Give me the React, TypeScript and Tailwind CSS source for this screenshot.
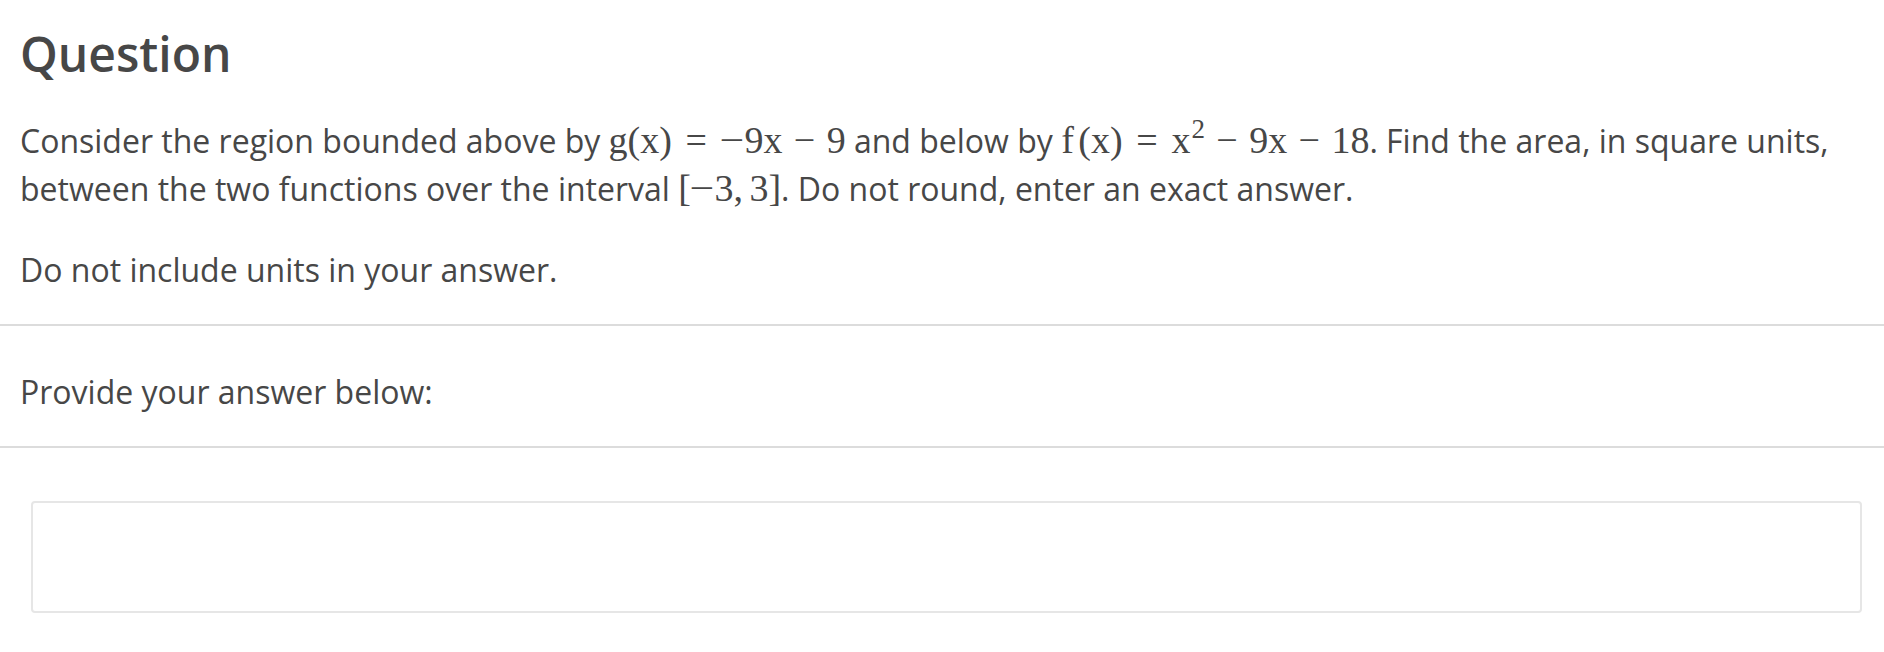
import React from "react";

const M = ({ children, className = "" }: { children: React.ReactNode; className?: string }) => (
  <span className={"whitespace-nowrap text-[38px] leading-[0] [font-family:'Liberation_Serif','Times_New_Roman',serif] " + className}>
    {children}
  </span>
);

const Rel = ({ children }: { children: React.ReactNode }) => <span className="mx-[0.36em]">{children}</span>;
const Bin = ({ children }: { children: React.ReactNode }) => <span className="mx-[0.3em]">{children}</span>;
const Un = ({ children }: { children: React.ReactNode }) => (
  <span className="mr-[0.06em] inline-block scale-x-[1.15]">{children}</span>
);

export default function App() {
  return (
    <div className="min-h-[652px] w-full bg-white text-[#474747] [font-family:'Open_Sans',sans-serif]">
      <div className="border-b-2 border-[#dcdcdc] px-[20px] pb-[30px] pt-[25px]">
        <h1 className="text-[48px] font-semibold leading-[58px] text-[#474747]">Question</h1>
        <p className="mt-[34px] text-[32px] leading-[48px]">
          Consider the region bounded above by{" "}
          <M>
            g(x)
            <Rel>=</Rel>
            <Un>−</Un>9x
            <Bin>−</Bin>9
          </M>{" "}
          and below by{" "}
          <M>
            f<span className="ml-[0.12em]">(x)</span>
            <Rel>=</Rel>x<sup className="relative top-[-15px] ml-[1px] text-[27px]">2</sup>
            <Bin>−</Bin>9x
            <Bin>−</Bin>18
          </M>
          . Find the area, in square units, between the two functions over the interval{" "}
          <M>
            [<Un>−</Un>3,<span className="ml-[0.167em]">3</span>]
          </M>
          . Do not round, enter an exact answer.
        </p>
        <p className="mt-[33px] text-[32px] leading-[48px]">Do not include units in your answer.</p>
      </div>
      <div className="border-b-2 border-[#dcdcdc] px-[20px] pb-[30px] pt-[42px]">
        <p className="text-[32px] leading-[48px]">Provide your answer below:</p>
      </div>
      <div className="pl-[31px] pr-[22px] pt-[53px]">
        <div className="h-[112px] w-[1831px] rounded-[4px] border-2 border-[#e6e6e6] bg-white"></div>
      </div>
    </div>
  );
}
